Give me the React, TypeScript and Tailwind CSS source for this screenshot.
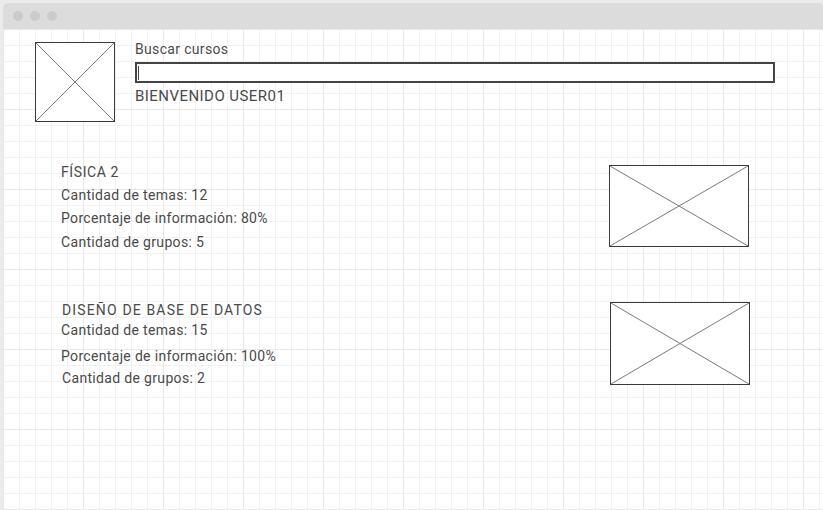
const Placeholder = ({ className }: { className: string }) => (
  <div className={`relative shrink-0 border-[1.5px] border-[#3a3a3a] bg-white ${className}`}>
    <svg className="absolute inset-0 h-full w-full" viewBox="0 0 100 100" preserveAspectRatio="none">
      <line x1="0" y1="0" x2="100" y2="100" stroke="#7a7a7a" strokeWidth="1" vectorEffect="non-scaling-stroke" />
      <line x1="100" y1="0" x2="0" y2="100" stroke="#7a7a7a" strokeWidth="1" vectorEffect="non-scaling-stroke" />
    </svg>
  </div>
);

const courses = [
  {
    name: "FÍSICA 2",
    lines: ["Cantidad de temas: 12", "Porcentaje de información: 80%", "Cantidad de grupos: 5"],
  },
  {
    name: "DISEÑO DE BASE DE DATOS",
    lines: ["Cantidad de temas: 15", "Porcentaje de información: 100%", "Cantidad de grupos: 2"],
  },
];

export default function App() {
  return (
    <div className="flex h-[510px] w-[823px] flex-col overflow-hidden bg-[#ebebeb] pl-[3px] pt-[3px] font-['Roboto',sans-serif] text-[14px] leading-[16px] tracking-[0.33px] text-[#4a4a4a]">
      {/* window bar */}
      <div className="flex h-[26px] shrink-0 items-center gap-[7px] rounded-tl-[5px] rounded-tr-[5px] bg-[#dcdcdc] pl-[10px]">
        <span className="h-[10px] w-[10px] rounded-full bg-[#cbcbcb]" />
        <span className="h-[10px] w-[10px] rounded-full bg-[#cbcbcb]" />
        <span className="h-[10px] w-[10px] rounded-full bg-[#cbcbcb]" />
      </div>

      {/* canvas */}
      <div className="flex-1 bg-white bg-[linear-gradient(to_right,#e8e8e8_1px,transparent_1px),linear-gradient(to_bottom,#e8e8e8_1px,transparent_1px),linear-gradient(to_right,#f2f2f2_1px,transparent_1px),linear-gradient(to_bottom,#f2f2f2_1px,transparent_1px)] bg-[size:80px_80px,80px_80px,16px_16px,16px_16px]">
        <div className="ml-[32px] mt-[12px] flex items-start gap-[20px]">
          <Placeholder className="mt-px h-[80px] w-[80px]" />
          <div className="flex flex-col">
            <span>Buscar cursos</span>
            <div className="mt-[5px] flex h-[21px] w-[640px] items-center border-2 border-[#444] bg-white pl-[1px]">
              <span className="h-[14px] w-px bg-[#444]" />
            </div>
            <span className="mt-[4px] text-[15px] leading-[18px] tracking-[0.45px]">BIENVENIDO USER01</span>
          </div>
        </div>

        <div className="ml-[58px] mt-[42px] flex items-start pr-[74px]">
          <div className="flex flex-col">
            <span className="tracking-[0.6px]">{courses[0].name}</span>
            <span className="mt-[7px]">{courses[0].lines[0]}</span>
            <span className="mt-[7px]">{courses[0].lines[1]}</span>
            <span className="mt-[8px]">{courses[0].lines[2]}</span>
          </div>
          <Placeholder className="ml-auto mt-px h-[82px] w-[140px]" />
        </div>

        <div className="ml-[58px] mt-[52px] flex items-start pr-[73px]">
          <div className="flex flex-col">
            <span className="ml-px tracking-[1.15px]">{courses[1].name}</span>
            <span className="mt-[4px]">{courses[1].lines[0]}</span>
            <span className="mt-[10px]">{courses[1].lines[1]}</span>
            <span className="ml-px mt-[6px]">{courses[1].lines[2]}</span>
          </div>
          <Placeholder className="ml-auto h-[83px] w-[140px]" />
        </div>
      </div>
    </div>
  );
}
